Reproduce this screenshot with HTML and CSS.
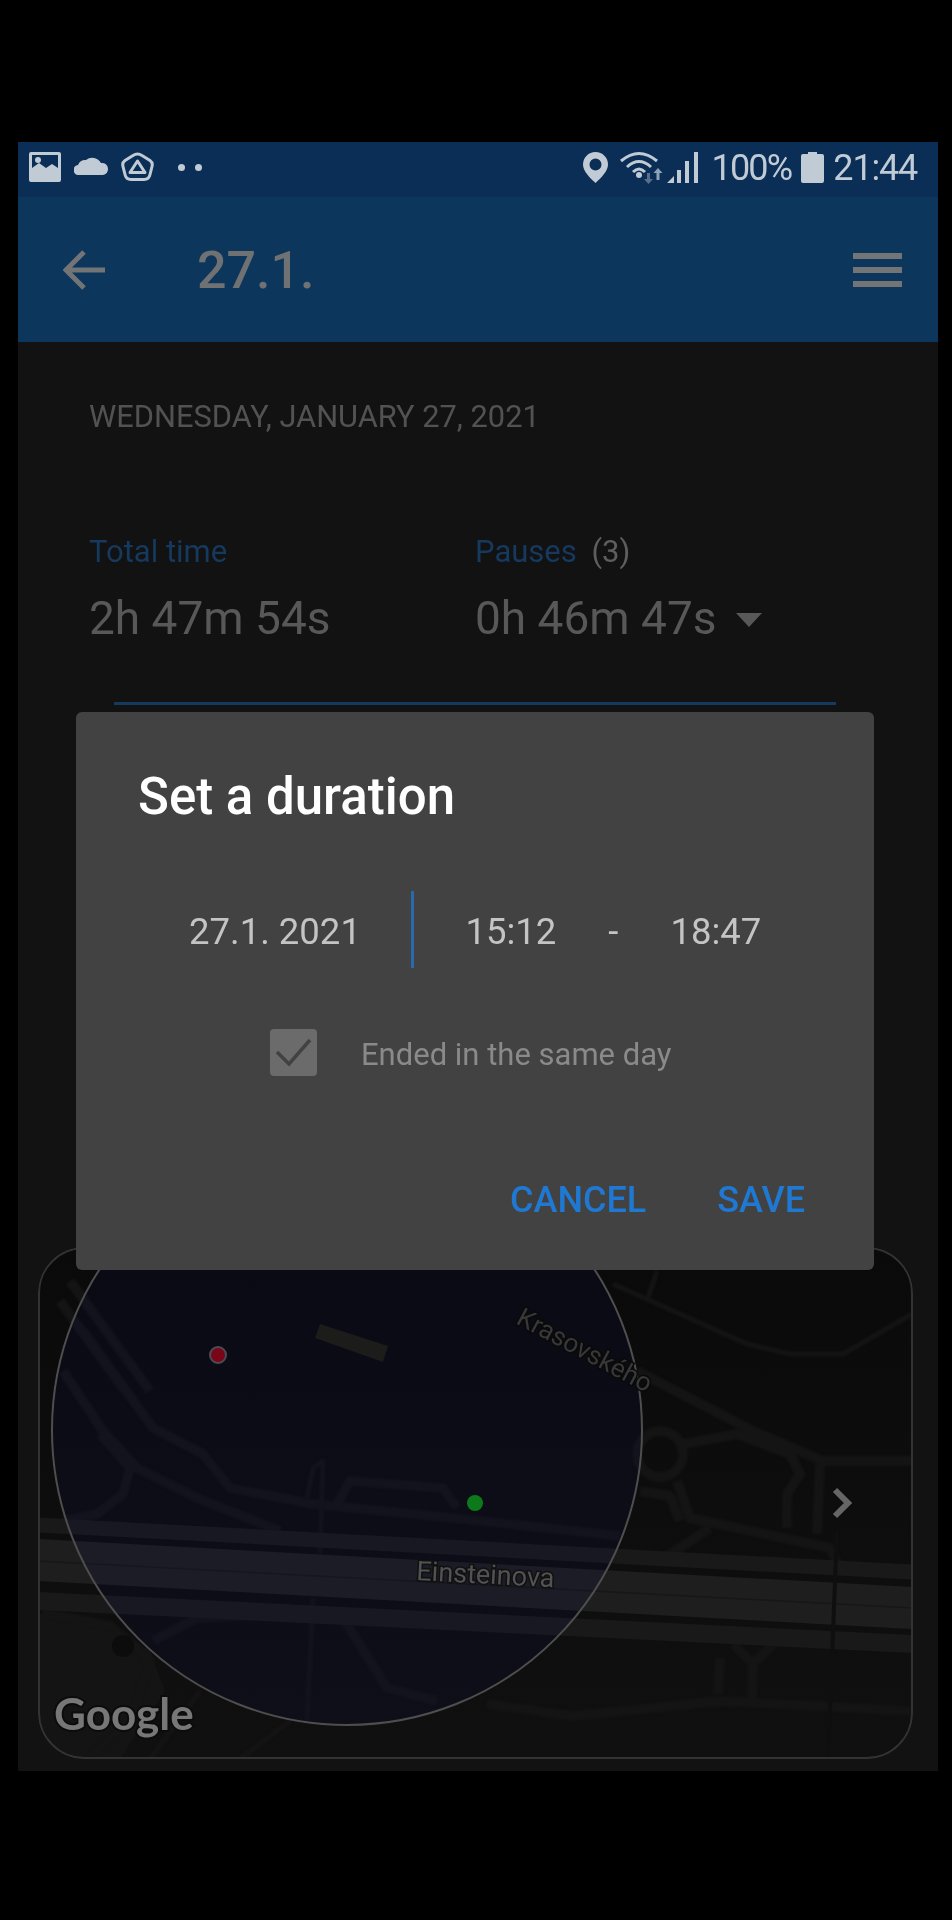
FILE: index.html
```html
<!DOCTYPE html>
<html lang="en">
<head>
<meta charset="utf-8">
<title>Set a duration</title>
<link rel="stylesheet" href="styles.css">
</head>
<body>
<div class="screen">
  <div class="status">
    <svg class="ic-image" viewBox="0 0 32 30"><path class="fill-s" fill-rule="evenodd" d="M2 0h28a2 2 0 0 1 2 2v26a2 2 0 0 1-2 2H2a2 2 0 0 1-2-2V2a2 2 0 0 1 2-2zM3 3v13l7-5 7 5 6-4 6 4V3z"/><circle class="fill-s" cx="9" cy="8" r="3"/></svg>
    <svg class="ic-cloud" viewBox="0 0 34 19"><path class="fill-s" d="M5 19a5 5 0 0 1-1-10 8 8 0 0 1 8-5 10 10 0 0 1 15 3 6 6 0 0 1 7 6 6 6 0 0 1-5 6z"/></svg>
    <svg class="ic-tri" viewBox="0 0 33 30"><path class="line-s" d="M12 3.500q4.500-3 9 0l8 5q3 2 2 6l-2 8q-1 5-6 5H10q-5 0-6-5l-2-8q-1-4 2-6z"/><path class="line-s thin" d="M16.500 9l7.500 11.500H9z"/></svg>
    <span class="dots"><i></i><i></i></span>
    <span class="status-fill"></span>
    <svg class="ic-pin" viewBox="0 0 25 31"><path class="fill-s" fill-rule="evenodd" d="M12.500 0C5.500 0 0 5.500 0 12.500 0 19 7 26 12.500 31 18 26 25 19 25 12.500 25 5.500 19.500 0 12.500 0zm0 6.500a6 6 0 1 1 0 12 6 6 0 0 1 0-12z"/></svg>
    <svg class="ic-wifi" viewBox="0 0 44 34"><path class="arc" d="M1 11Q19-4 37 11"/><path class="arc" d="M7 17Q19 6 31 17"/><path class="arc" d="M13 22Q19 16 25 22"/><circle class="fill-s" cx="19" cy="25" r="3"/><path class="fill-d" d="M27 23h3v6h3l-4.500 5-4.500-5h3z"/><path class="fill-m" d="M38 18l4.500 5h-3v7h-3v-7h-3z"/></svg>
    <svg class="ic-signal" viewBox="0 0 32 31"><path class="fill-s" d="M0 31l7-7v7zM10 18h4v13h-4zM18 9h4v22h-4zM27 0h4v31h-4z"/></svg>
    <span class="status-text pct">100%</span>
    <svg class="ic-batt" viewBox="0 0 23 31"><path class="fill-s" d="M7 0h9v2h5a2 2 0 0 1 2 2v25a2 2 0 0 1-2 2H2a2 2 0 0 1-2-2V4a2 2 0 0 1 2-2h5z"/></svg>
    <span class="status-text clock">21:44</span>
  </div>

  <header class="appbar">
    <svg class="ic-back" viewBox="0 0 42 40"><path d="M21 2L3 20l18 18M3 20h39"/></svg>
    <h1 class="appbar-title">27.1.</h1>
    <span class="burger"><i></i><i></i><i></i></span>
  </header>

  <main class="content">
    <p class="date">WEDNESDAY, JANUARY 27, 2021</p>
    <div class="stats">
      <div class="stat">
        <div class="stat-label">Total time</div>
        <div class="stat-value">2h 47m 54s</div>
      </div>
      <div class="stat">
        <div class="stat-label">Pauses <span class="count">(3)</span></div>
        <div class="stat-value">0h 46m 47s <span class="caret"></span></div>
      </div>
    </div>
    <div class="rule"></div>

    <div class="map">
      <svg class="map-svg" viewBox="38 1246 874 512">
        <defs>
          <linearGradient id="ground" x1="0" y1="0" x2="0" y2="1">
            <stop offset="0" stop-color="#0a0a0a"/>
            <stop offset="1" stop-color="#101010"/>
          </linearGradient>
        </defs>
        <rect class="map-ground" x="38" y="1246" width="874" height="512"/>
        <path class="blob" d="M38 1612L110 1622 150 1650 165 1690 120 1758H38z"/>
        <g class="roads">
          <path d="M63 1370L103 1430 137 1467 197 1497 280 1530"/>
          <path d="M83 1330L153 1427 203 1453 230 1487 313 1503 453 1517 620 1535"/>
          <path d="M100 1433L130 1467 123 1493 97 1513 63 1520"/>
          <path d="M337 1503L350 1480 443 1487 457 1507"/>
          <path d="M637 1370L753 1430 823 1460 912 1460"/>
          <circle cx="660" cy="1453" r="23"/>
          <path d="M684 1443L737 1433 790 1453 800 1473 787 1493 787 1527"/>
          <path d="M820 1463L817 1533"/>
          <path d="M677 1480L690 1517 830 1547 837 1562"/>
          <path d="M660 1560L710 1527"/>
          <path d="M640 1490L670 1495 680 1520"/>
          <path d="M487 1703L573 1715 720 1700 912 1710"/>
          <path d="M733 1643L753 1663 773 1643M753 1663L752 1700M720 1657L718 1693"/>
          <path d="M153 1640L197 1617 313 1610"/>
          <path d="M343 1617L387 1687 437 1700"/>
          <path d="M42 1612L110 1625 150 1660 130 1720 90 1755"/>
          <path d="M60 1300L125 1390M70 1280L150 1390"/>
        </g>
        <g class="roads thin">
          <path d="M613 1283L747 1343 790 1353 843 1353 912 1313"/>
          <path d="M657 1270L647 1300"/>
          <path d="M307 1497L313 1467 323 1460 320 1553"/>
          <path d="M313 1597L307 1720"/>
          <path d="M200 1690L150 1758M290 1720L240 1758"/>
        </g>
        <path class="band-a" d="M38 1524L912 1571"/>
        <path class="band-b" d="M38 1559L912 1607"/>
        <path class="band-c" d="M38 1600L912 1643"/>
        <path class="band-split" d="M38 1560L912 1607"/>
        <path class="cut" d="M837 1530L828 1758"/>
        <circle class="hole" cx="123" cy="1645" r="11"/>
        <circle class="disc" cx="347" cy="1429" r="295"/>
        <polygon class="building" points="320,1323 388,1345 383,1361 315,1337"/>
        <circle class="dot-red" cx="218" cy="1354" r="8"/>
        <circle class="dot-green" cx="475" cy="1502" r="8"/>
        <text class="label-k" transform="translate(515 1322) rotate(28)">Krasovského</text>
        <text class="label-e" transform="translate(416 1579) rotate(3)">Einsteinova</text>
        <path class="chevron" d="M835 1489l13 13-13 13"/>
        <text class="google" x="54" y="1729">Google</text>
      </svg>
    </div>
  </main>

  <section class="dialog">
    <h2 class="dialog-title">Set a duration</h2>
    <div class="dialog-times">
      <span class="t-date">27.1. 2021</span>
      <span class="t-divider"></span>
      <span class="t-from">15:12</span>
      <span class="t-dash">-</span>
      <span class="t-to">18:47</span>
    </div>
    <div class="dialog-check">
      <span class="checkbox"><svg viewBox="0 0 47 47"><path d="M7 23l12 12L40 11"/></svg></span>
      <span class="check-label">Ended in the same day</span>
    </div>
    <div class="dialog-actions">
      <span class="action">CANCEL</span>
      <span class="action">SAVE</span>
    </div>
  </section>
</div>
</body>
</html>
```
FILE: styles.css
```css
html, body { margin: 0; padding: 0; background: #000; }
body { height: 1920px; overflow: hidden; font-family: Roboto, "Liberation Sans", sans-serif; }

.screen {
  position: relative;
  margin: 142px 0 0 18px;
  width: 920px;
  height: 1629px;
  background: #121212;
  display: flex;
  flex-direction: column;
  filter: blur(.6px);
}

/* status bar */
.status {
  height: 55px;
  background: #0a2e55;
  display: flex;
  align-items: flex-start;
  padding: 10px 21px 0 11px;
  box-sizing: border-box;
  color: #c0cbd6;
}
.status-fill { flex: 1; }
.fill-s { fill: #c0cbd6; }
.fill-d { fill: #59708c; }
.fill-m { fill: #8ea2b8; }
.line-s { fill: none; stroke: #c0cbd6; stroke-width: 3; stroke-linejoin: round; }
.line-s.thin { stroke-width: 3; }
.arc { fill: none; stroke: #c0cbd6; stroke-width: 3; }
.ic-image { width: 32px; height: 30px; flex: none; }
.ic-cloud { width: 34px; height: 19px; margin: 4px 0 0 13px; flex: none; }
.ic-tri { width: 33px; height: 30px; margin-left: 13px; flex: none; }
.dots { display: flex; gap: 10px; margin: 12px 0 0 24px; }
.dots i { width: 7px; height: 7px; border-radius: 50%; background: #c0cbd6; }
.ic-pin { width: 25px; height: 31px; flex: none; }
.ic-wifi { width: 44px; height: 34px; margin: -2px 0 0 12px; flex: none; }
.ic-signal { width: 32px; height: 31px; margin-left: 3px; flex: none; }
.status-text { font-size: 36px; line-height: 32px; white-space: nowrap; }
.pct { margin-left: 12px; letter-spacing: -1.8px; }
.ic-batt { width: 23px; height: 31px; margin-left: 10px; flex: none; }
.clock { margin-left: 9px; letter-spacing: -1.2px; }

/* app bar */
.appbar {
  height: 145px;
  background: #0d365c;
  display: flex;
  align-items: center;
  padding: 0 36px 0 45px;
  box-sizing: border-box;
}
.ic-back { width: 42px; height: 40px; flex: none; margin-top: 1px; }
.ic-back path { fill: none; stroke: #737476; stroke-width: 5; }
.appbar-title {
  margin: 3px 0 0 92px;
  flex: 1;
  font-size: 52px;
  font-weight: 500;
  line-height: 60px;
  color: #707173;
}
.burger { display: flex; flex-direction: column; gap: 8px; }
.burger i { display: block; width: 49px; height: 6px; background: #737476; }

/* content */
.content { flex: 1; display: flex; flex-direction: column; min-height: 0; }
.date {
  margin: 57px 0 0 71px;
  font-size: 30.800px;
  line-height: 36px;
  color: #525252;
  white-space: nowrap;
}
.stats { display: grid; grid-template-columns: 386px 1fr; margin: 99px 0 0 71px; }
.stat-label { font-size: 31px; line-height: 36px; color: #15395f; }
.count { color: #5e5e5e; margin-left: 7px; }
.stat-value { margin-top: 23px; font-size: 46px; line-height: 50px; color: #585858; white-space: nowrap; }
.caret {
  display: inline-block;
  width: 0; height: 0;
  margin-left: 8px;
  vertical-align: 7px;
  border-left: 13px solid transparent;
  border-right: 13px solid transparent;
  border-top: 14px solid #585858;
}
.rule { height: 3px; margin: 59px 102px 0 96px; background: #15395f; }

/* map */
.map {
  margin: 542px 25px 0 20px;
  height: 512px;
  border-radius: 46px;
  overflow: hidden;
  position: relative;
}
.map::after {
  content: "";
  position: absolute;
  inset: 0;
  border: 2px solid #333;
  border-radius: 46px;
}
.map-svg { display: block; width: 874px; height: 512px; }
.map-ground { fill: url(#ground); }
.blob { fill: #141414; }
.roads { filter: blur(1px); }
.roads path, .roads circle { fill: none; stroke: #141414; stroke-width: 10; stroke-linejoin: round; }
.roads.thin path { stroke-width: 5; }
.band-a, .band-c { fill: none; stroke: #191919; }
.band-a { stroke-width: 15; }
.band-b { fill: none; stroke: #1e1e1e; stroke-width: 42; }
.band-c { stroke-width: 18; }
.band-split { fill: none; stroke: #171717; stroke-width: 1.5; }
.cut { fill: none; stroke: #0f0f0f; stroke-width: 4; }
.hole { fill: #0c0c0c; }
.disc { fill: rgba(8, 8, 150, .075); stroke: #4e4e4e; stroke-width: 2; }
.building { fill: #1c1c1a; }
.dot-red { fill: #7a0418; stroke: #4c4c55; stroke-width: 2; }
.dot-green { fill: #0c7a1a; }
.label-k { font-size: 26px; fill: #383838; stroke: #0a0a0a; stroke-width: 3; paint-order: stroke; }
.label-e { font-size: 27px; fill: #525252; stroke: #101010; stroke-width: 3; paint-order: stroke; }
.chevron { fill: none; stroke: #666; stroke-width: 6; }
.google { font-family: Lato, sans-serif; font-size: 44px; font-weight: 700; fill: #777; stroke: #0c0c0c; stroke-width: 4; paint-order: stroke; }

/* dialog */
.dialog {
  position: absolute;
  left: 58px;
  top: 570px;
  width: 798px;
  height: 558px;
  background: #424242;
  border-radius: 6px;
  display: flex;
  flex-direction: column;
  box-sizing: border-box;
}
.dialog-title {
  margin: 57px 0 0 62px;
  font-size: 51px;
  font-weight: 500;
  line-height: 56px;
  color: #fff;
}
.dialog-times {
  display: flex;
  align-items: center;
  height: 77px;
  margin-top: 68px;
  font-size: 36.500px;
  color: #c4c4c4;
  padding-left: 113px;
}
.t-divider { width: 3px; height: 77px; background: #2a69ad; margin: 0 0 4px 50.500px; }
.t-from { margin-left: 51px; }
.t-dash { margin-left: 52px; }
.t-to { margin-left: 52px; }
.dialog-check { display: flex; align-items: center; margin: 59px 0 0 194px; }
.checkbox { width: 47px; height: 47px; border-radius: 4px; background: #6b6b6b; flex: none; }
.checkbox svg { display: block; width: 47px; height: 47px; }
.checkbox path { fill: none; stroke: #424242; stroke-width: 3.5; }
.check-label { margin-left: 44px; padding-top: 3px; font-size: 31px; color: #8a8a8a; white-space: nowrap; }
.dialog-actions { display: flex; justify-content: flex-end; gap: 71px; margin-top: 103px; padding-right: 69px; }
.action { font-size: 36px; font-weight: 500; line-height: 42px; color: #1f78d1; }
```
